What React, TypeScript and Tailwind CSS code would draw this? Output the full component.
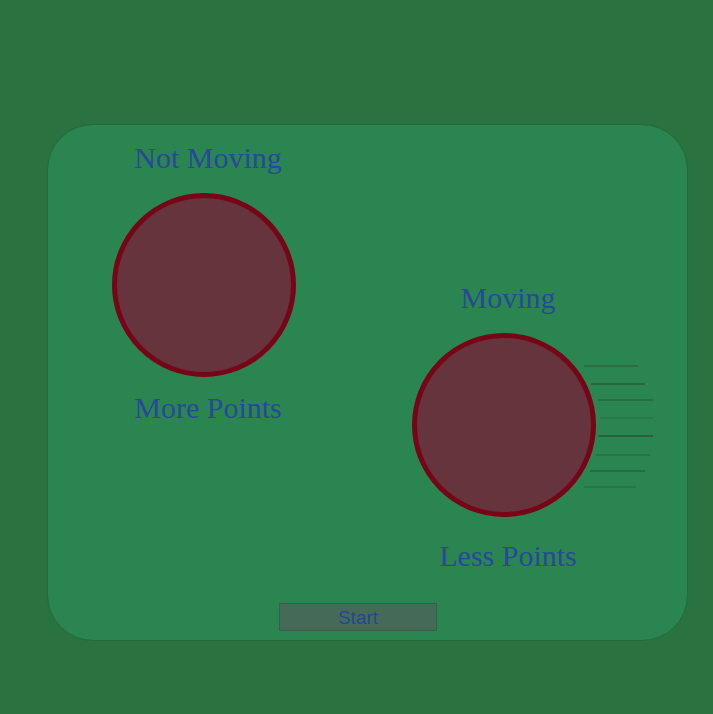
import React from "react";

const serif = { fontFamily: '"Liberation Serif", "Times New Roman", serif' };

function Ball({ speedLines = false }: { speedLines?: boolean }) {
  // speed streaks trailing off the right side of a moving ball
  const streaks = [
    { y: 33, x1: 172, x2: 226, o: 0.55 },
    { y: 51, x1: 179, x2: 233, o: 0.75 },
    { y: 67, x1: 186, x2: 241, o: 0.6 },
    { y: 85, x1: 188, x2: 242, o: 0.3 },
    { y: 103, x1: 186, x2: 241, o: 0.85 },
    { y: 122, x1: 184, x2: 238, o: 0.5 },
    { y: 138, x1: 178, x2: 233, o: 0.6 },
    { y: 154, x1: 172, x2: 224, o: 0.4 },
  ];
  return (
    <svg width={speedLines ? 244 : 184} height={184} viewBox={`0 0 ${speedLines ? 244 : 184} 184`} className="block">
      {speedLines &&
        streaks.map((s, i) => (
          <line key={i} x1={s.x1} y1={s.y} x2={s.x2} y2={s.y} stroke="#2c4f30" strokeOpacity={s.o} strokeWidth={1.6} />
        ))}
      <circle cx={92} cy={92} r={89.5} fill="#66343c" stroke="#770417" strokeWidth={5} />
    </svg>
  );
}

export default function App() {
  return (
    <div className="w-[713px] h-[714px] bg-[#2a7240] pt-[124px] pl-[47px] overflow-hidden">
      <div className="w-[641px] h-[517px] bg-[#2a8550] border-[1.5px] border-[#226a3a] rounded-[46px] flex flex-col">
        <div className="flex items-start">
          <div className="ml-[64px] mt-[17px] flex flex-col w-[192px]">
            <div className="h-[32px] leading-[32px] text-[30px] text-center text-[#28489c]" style={serif}>
              Not Moving
            </div>
            <div className="mt-[19px]">
              <Ball />
            </div>
            <div className="mt-[15px] h-[32px] leading-[32px] text-[30px] text-center text-[#28489c]" style={serif}>
              More Points
            </div>
          </div>
          <div className="ml-[108px] mt-[157px] flex flex-col">
            <div className="w-[192px] h-[32px] leading-[32px] text-[30px] text-center text-[#28489c]" style={serif}>
              Moving
            </div>
            <div className="mt-[19px]">
              <Ball speedLines />
            </div>
            <div className="w-[192px] mt-[23px] h-[32px] leading-[32px] text-[30px] text-center text-[#28489c]" style={serif}>
              Less Points
            </div>
          </div>
        </div>
        <div className="ml-[231px] mt-[31px]">
          <button
            className="w-[158px] h-[28px] flex items-center justify-center pt-[2px] bg-[#456b58] border border-[#3a5e48] text-[19px] leading-[20px] text-[#264690]"
            style={{ fontFamily: '"Liberation Sans", Arial, sans-serif' }}
          >
            Start
          </button>
        </div>
      </div>
    </div>
  );
}
